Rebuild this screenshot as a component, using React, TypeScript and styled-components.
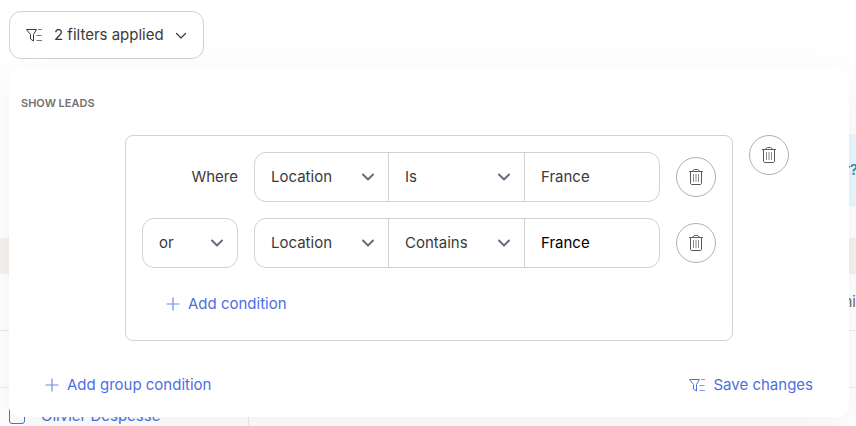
import React from "react";
import styled, { createGlobalStyle } from "styled-components";

const GlobalStyle = createGlobalStyle`
  *, *::before, *::after { box-sizing: border-box; }
  body {
    margin: 0;
    height: 100vh;
    overflow: hidden;
    background: #fff;
    color: #3a3a3a;
    font-family: Inter, "Liberation Sans", sans-serif;
    font-size: 15px;
    line-height: 20px;
  }
  button, select, input { font: inherit; color: inherit; margin: 0; }
`;

const border = "#d5d0cb";
const blue = "#4f6ee3";

const Toolbar = styled.header`
  position: relative;
  padding: 11px 7px 0 9px;
`;

const FilterToggle = styled.button`
  position: relative;
  z-index: 2;
  display: inline-flex;
  align-items: center;
  height: 48px;
  padding: 0 15px 0 16px;
  border: 1px solid #d2d0ce;
  border-radius: 12px;
  background: #fff;
  cursor: pointer;

  span { margin: 0 10px 0 12px; }
`;

const Panel = styled.section`
  position: absolute;
  z-index: 1;
  top: 67px;
  left: 9px;
  right: 7px;
  padding: 26px 12px 12px;
  border-radius: 12px;
  background: #fff;
  box-shadow: 0 10px 40px rgba(0, 0, 0, 0.06);
`;

const PanelTitle = styled.h2`
  margin: 0 0 22px;
  font-size: 11px;
  line-height: 20px;
  font-weight: 600;
  color: #74716e;
  text-transform: uppercase;
`;

const GroupRow = styled.div`
  display: flex;
  align-items: flex-start;
  gap: 16px;
  margin: 0 48px 24px 104px;
`;

const Group = styled.div`
  flex: 1;
  display: flex;
  flex-direction: column;
  align-items: stretch;
  gap: 16px;
  padding: 16px;
  border: 1px solid ${border};
  border-radius: 8px;
`;

const Condition = styled.div`
  display: flex;
  align-items: center;
  gap: 16px;
`;

const Lead = styled.div`
  flex: none;
  width: 96px;
  text-align: right;
`;

const Fields = styled.div`
  flex: 1;
  display: grid;
  grid-template-columns: 133fr 136fr 135fr;
  height: 50px;
  border: 1px solid ${border};
  border-radius: 12px;
  overflow: hidden;
`;

const SelectBox = styled.div<{ $framed?: boolean; $divided?: boolean }>`
  display: grid;
  align-items: center;
  min-width: 0;
  height: ${(p) => (p.$framed ? "50px" : "48px")};
  border: ${(p) => (p.$framed ? `1px solid ${border}` : "0")};
  border-left: ${(p) => (p.$framed || p.$divided ? `1px solid ${border}` : "0")};
  border-radius: ${(p) => (p.$framed ? "12px" : "0")};

  > * { grid-area: 1 / 1; }
  svg { justify-self: end; margin-right: 14px; pointer-events: none; }
`;

const Select = styled.select`
  appearance: none;
  width: 100%;
  height: 100%;
  padding: 0 32px 0 16px;
  border: 0;
  border-radius: 12px;
  background: transparent;
  cursor: pointer;
`;

const TextField = styled.input<{ $strong?: boolean }>`
  min-width: 0;
  width: 100%;
  height: 48px;
  padding: 0 16px 2px;
  border: 0;
  border-left: 1px solid ${border};
  background: transparent;
  color: ${(p) => (p.$strong ? "#000" : "#3a3a3a")};
`;

const RoundButton = styled.button`
  flex: none;
  display: grid;
  place-items: center;
  width: 40px;
  height: 40px;
  padding: 0;
  border: 1px solid #b3aeaa;
  border-radius: 50%;
  background: #fff;
  color: #5c5a58;
  cursor: pointer;
`;

const TextButton = styled.button`
  display: inline-flex;
  align-items: center;
  align-self: flex-start;
  gap: 8px;
  height: 40px;
  padding: 0 24px;
  border: 0;
  background: transparent;
  color: ${blue};
  cursor: pointer;
`;

const PanelFooter = styled.footer`
  display: flex;
  justify-content: space-between;
`;

const Banner = styled.div`
  display: flex;
  align-items: center;
  justify-content: flex-end;
  height: 72px;
  margin: 75px 0 32px 16px;
  background: #e8f8fe;
  color: #1d8fb5;
  font-weight: 600;

  p { margin: 0 -2px 0 0; }
`;

const Leads = styled.table`
  width: 100%;
  border-collapse: separate;
  border-spacing: 0;
  table-layout: fixed;

  th { height: 36px; padding: 0; background: #f5f1ee; }
  td { height: 57px; padding: 0 0 0 9px; border-bottom: 1px solid #f1e9e8; }
  th:first-child { width: 249px; }
  td:first-child { border-right: 1px solid #ece9e7; }
  td:last-child { padding: 0; text-align: right; color: #6c6966; }
`;

const LeadName = styled.div`
  display: flex;
  align-items: center;
  gap: 16px;

  a { color: ${blue}; text-decoration: none; }
`;

const Tick = styled.input`
  appearance: none;
  width: 16px;
  height: 16px;
  margin: 0;
  border: 1px solid ${blue};
  border-radius: 3px;
  background: #fff;
`;

const FilterIcon = () => (
  <svg width="16" height="16" viewBox="1 0 16 16" fill="none" stroke="currentColor" aria-hidden="true">
    <path d="M1.5 2.5H11.5L8.5 7.5V14L5.5 12V7.5L1.5 2.5Z" strokeLinejoin="round" />
    <path d="M13 2.5H17M11.5 8.5H16.5M11.5 13.5H17" opacity="0.7" />
  </svg>
);

const PlusIcon = () => (
  <svg width="14" height="14" viewBox="0 0 14 14" fill="none" stroke="currentColor" aria-hidden="true">
    <path d="M0.5 7H13.5M7 0.5V13.5" strokeWidth="1.2" opacity="0.8" />
  </svg>
);

const ChevronIcon = ({ thin }: { thin?: boolean }) => (
  <svg
    width={thin ? 14 : 12}
    height="12"
    viewBox={thin ? "-1 0 14 12" : "0 0 12 12"}
    fill="none"
    stroke={thin ? "#3a3a3a" : "#666b80"}
    strokeWidth={thin ? 1.2 : 2}
    strokeLinecap="round"
    strokeLinejoin="round"
    aria-hidden="true"
  >
    <path d={thin ? "M1.5 4.5L6 9L10.5 4.5" : "M1 3.5L6 8.5L11 3.5"} />
  </svg>
);

const TrashIcon = () => (
  <svg width="16" height="18" viewBox="0 0 16 18" fill="none" stroke="currentColor" aria-hidden="true">
    <path d="M1 3.5H15M5 3.5C5 1.8 5.8 1.5 6.5 1.5H9.5C10.2 1.5 11 1.8 11 3.5M2.5 3.5V15C2.5 16 3 16.5 4 16.5H12C13 16.5 13.5 16 13.5 15V3.5" />
    <path d="M5.5 6V14M8 6V14M10.5 6V14" opacity="0.7" />
  </svg>
);

type ChoiceProps = { label: string; options: string[]; framed?: boolean; divided?: boolean };

const Choice = ({ label, options, framed, divided }: ChoiceProps) => (
  <SelectBox $framed={framed} $divided={divided}>
    <Select aria-label={label}>
      {options.map((option) => (
        <option key={option}>{option}</option>
      ))}
    </Select>
    <ChevronIcon />
  </SelectBox>
);

const conditions = [
  { operator: "Is", value: "France", strong: false },
  { operator: "Contains", value: "France", strong: true },
];

export default function App() {
  return (
    <>
      <GlobalStyle />
      <Toolbar>
        <FilterToggle type="button" aria-expanded="true">
          <FilterIcon />
          <span>2 filters applied</span>
          <ChevronIcon thin />
        </FilterToggle>
        <Panel aria-label="Filters">
          <PanelTitle>Show leads</PanelTitle>
          <GroupRow>
            <Group>
              {conditions.map(({ operator, value, strong }, index) => (
                <Condition key={operator}>
                  <Lead>
                    {index === 0 ? "Where" : <Choice framed label="Conjunction" options={["or"]} />}
                  </Lead>
                  <Fields>
                    <Choice label="Field" options={["Location"]} />
                    <Choice divided label="Operator" options={[operator]} />
                    <TextField aria-label="Value" defaultValue={value} $strong={strong} />
                  </Fields>
                  <RoundButton type="button" aria-label="Delete condition">
                    <TrashIcon />
                  </RoundButton>
                </Condition>
              ))}
              <TextButton type="button">
                <PlusIcon />
                Add condition
              </TextButton>
            </Group>
            <RoundButton type="button" aria-label="Delete group">
              <TrashIcon />
            </RoundButton>
          </GroupRow>
          <PanelFooter>
            <TextButton type="button">
              <PlusIcon />
              Add group condition
            </TextButton>
            <TextButton type="button">
              <FilterIcon />
              Save changes
            </TextButton>
          </PanelFooter>
        </Panel>
      </Toolbar>
      <main>
        <Banner>
          <p>r?</p>
        </Banner>
        <Leads>
          <thead>
            <tr>
              <th />
              <th />
            </tr>
          </thead>
          <tbody>
            <tr>
              <td />
              <td>ni</td>
            </tr>
            <tr>
              <td />
              <td />
            </tr>
            <tr>
              <td>
                <LeadName>
                  <Tick type="checkbox" aria-label="Select Olivier Despesse" />
                  <a href="#olivier-despesse">Olivier Despesse</a>
                </LeadName>
              </td>
              <td />
            </tr>
          </tbody>
        </Leads>
      </main>
    </>
  );
}
